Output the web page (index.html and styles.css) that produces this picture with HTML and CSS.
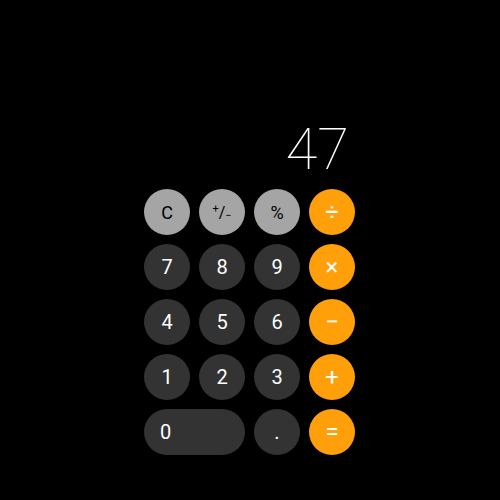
FILE: index.html
```html
<!DOCTYPE html>
<html>
<head>
<meta charset="utf-8">
<link rel="stylesheet" href="styles.css">
</head>
<body>
<div class="calc">
  <div class="display">47</div>
  <div class="keys">
    <div class="key fn">C</div>
    <div class="key fn pm"><span class="sup">+</span><span class="sl">/</span><span class="sub">−</span></div>
    <div class="key fn">%</div>
    <div class="key op">÷</div>
    <div class="key num">7</div>
    <div class="key num">8</div>
    <div class="key num">9</div>
    <div class="key op">×</div>
    <div class="key num">4</div>
    <div class="key num">5</div>
    <div class="key num">6</div>
    <div class="key op">−</div>
    <div class="key num">1</div>
    <div class="key num">2</div>
    <div class="key num">3</div>
    <div class="key op">+</div>
    <div class="key num zero">0</div>
    <div class="key num">.</div>
    <div class="key op">=</div>
  </div>
</div>
</body>
</html>
```
FILE: styles.css
```css
html, body {
  margin: 0;
  padding: 0;
  background: #000;
  width: 500px;
  height: 500px;
  overflow: hidden;
}
.calc {
  padding-top: 120px;
  margin-left: 144px;
  width: 211px;
  font-family: Roboto, "Liberation Sans", sans-serif;
}
.display {
  height: 58px;
  font-size: 58px;
  line-height: 58px;
  font-weight: 100;
  color: #fff;
  text-align: right;
  padding-right: 6px;
  margin-bottom: 11px;
}
.keys {
  display: grid;
  grid-template-columns: repeat(4, 46px);
  grid-auto-rows: 46px;
  gap: 9px;
}
.key {
  border-radius: 23px;
  display: flex;
  align-items: center;
  justify-content: center;
  font-size: 20px;
  color: #fff;
}
.fn {
  background: #a5a5a5;
  color: #000;
  font-size: 18px;
}
.num {
  background: #333333;
}
.op {
  background: #ff9f0a;
  font-size: 24px;
}
.zero {
  grid-column: span 2;
  justify-content: flex-start;
  padding-left: 16px;
}
.pm {
  font-size: 16px;
}
.pm .sup {
  font-size: 11px;
  position: relative;
  top: -4px;
}
.pm .sub {
  font-size: 11px;
  position: relative;
  top: 3px;
}
```
